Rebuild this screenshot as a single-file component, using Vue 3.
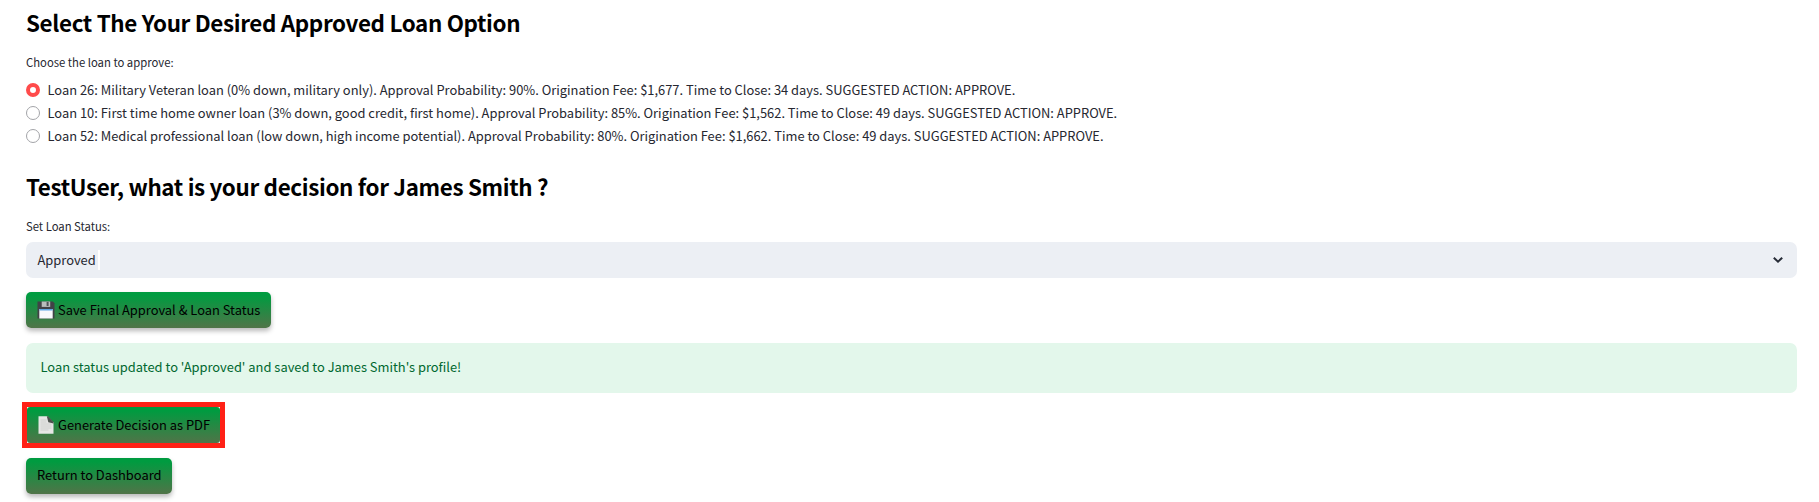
<script setup>
import { ref } from 'vue'

const loans = [
  'Loan 26: Military Veteran loan (0% down, military only). Approval Probability: 90%. Origination Fee: $1,677. Time to Close: 34 days. SUGGESTED ACTION: APPROVE.',
  'Loan 10: First time home owner loan (3% down, good credit, first home). Approval Probability: 85%. Origination Fee: $1,562. Time to Close: 49 days. SUGGESTED ACTION: APPROVE.',
  'Loan 52: Medical professional loan (low down, high income potential). Approval Probability: 80%. Origination Fee: $1,662. Time to Close: 49 days. SUGGESTED ACTION: APPROVE.',
]
const selected = ref(0)
</script>

<template>
  <main class="page">
    <h2 class="title">Select The Your Desired Approved Loan Option</h2>
    <p class="label">Choose the loan to approve:</p>
    <div class="radios">
      <div v-for="(loan, i) in loans" :key="i" class="radio" @click="selected = i">
        <span class="dot" :class="{ on: selected === i }"></span>
        <span class="text">{{ loan }}</span>
      </div>
    </div>
    <h2 class="title second">TestUser, what is your decision for James Smith ?</h2>
    <p class="label">Set Loan Status:</p>
    <div class="select">
      <span class="text">Approved</span><span class="caret"></span>
      <svg class="chevron" width="12" height="8" viewBox="0 0 12 8"><path d="M1.8 1.8 6 5.7l4.2-3.9" fill="none" stroke="#262b36" stroke-width="2" /></svg>
    </div>
    <button class="btn save">
      <svg class="icon" width="18" height="18" viewBox="0 0 18 18">
        <path d="M0.5 0.5h15.3l1.7 1.7v15.3h-17z" fill="#414247" />
        <path d="M4.7 0.5h8.5v5.4H4.7z" fill="#b9bdbd" />
        <path d="M9.6 1h2v4h-2z" fill="#505459" />
        <path d="M2.3 8h13.4v9.5H2.3z" fill="#f8f9fb" />
        <path d="M2.3 8h13.4v1.5H2.3z" fill="#5fa7e5" />
      </svg>
      <span class="text">Save Final Approval &amp; Loan Status</span>
    </button>
    <div class="alert"><span class="text">Loan status updated to 'Approved' and saved to James Smith's profile!</span></div>
    <div class="highlight">
      <button class="btn generate">
        <svg class="icon" width="18" height="18" viewBox="0 0 18 18">
          <path d="M1.5 0.3h9.2l5.8 6.2v11.2h-15z" fill="#e6e6e5" />
          <path d="M9.8 0.3h1.2l5.5 5.6v1.6l-5.2-1.2z" fill="#4c524e" />
          <path d="M3.5 4h6M3.5 6h6M3.5 8h11M3.5 10h11M3.5 12h11M3.5 14h8" stroke="#c9cac9" stroke-width="0.8" />
        </svg>
        <span class="text">Generate Decision as PDF</span>
      </button>
    </div>
    <button class="btn return"><span class="text">Return to Dashboard</span></button>
  </main>
</template>

<style>
body {
  margin: 0;
  background: #fff;
}
</style>

<style scoped>
.page {
  box-sizing: border-box;
  height: 502px;
  padding: 7px 22px 0 26px;
  display: flex;
  flex-direction: column;
  align-items: flex-start;
  overflow: hidden;
  font-family: "Noto Sans CJK SC", "Liberation Sans", sans-serif;
  font-size: 12.9px;
  color: #262730;
  white-space: nowrap;
}
.title {
  margin: 0;
  height: 32px;
  line-height: 30px;
  font-size: 22.4px;
  letter-spacing: -0.35px;
  font-weight: 700;
  color: #000;
}
.label {
  margin: 13px 0 0;
  height: 20px;
  line-height: 20px;
  font-size: 11.3px;
}
.radios {
  margin-top: 7px;
}
.radio {
  height: 23px;
  display: flex;
  align-items: center;
  gap: 7.5px;
}
.text {
  padding-bottom: 2px;
}
.dot {
  box-sizing: border-box;
  width: 14px;
  height: 14px;
  margin-bottom: 1px;
  border: 1px solid #a3a4a8;
  border-radius: 50%;
  background: #fff;
}
.dot.on {
  border: 4.5px solid #ff4b4b;
}
.second {
  margin-top: 23px;
}
.select {
  box-sizing: border-box;
  margin-top: 6px;
  width: 100%;
  height: 36px;
  padding: 0 13px 0 11.5px;
  display: flex;
  align-items: center;
  border-radius: 7px;
  background: #eceff4;
}
.caret {
  width: 2px;
  height: 20px;
  margin-left: 2px;
  background: #fff;
}
.chevron {
  margin-left: auto;
}
.btn {
  box-sizing: border-box;
  height: 36px;
  padding: 0 0 0 11px;
  display: flex;
  align-items: center;
  gap: 3px;
  border: 0;
  border-radius: 5px;
  background: linear-gradient(#009b40 10%, #507448 100%);
  box-shadow: 0 3px 5px rgba(0, 0, 0, 0.28);
  font: inherit;
  color: #000;
}
.icon {
  flex: none;
}
.save {
  margin-top: 14px;
  width: 245px;
}
.alert {
  box-sizing: border-box;
  margin-top: 15px;
  width: 100%;
  height: 50px;
  padding: 0 0 2px 14.5px;
  display: flex;
  align-items: center;
  border-radius: 7px;
  background: #e3f7eb;
  color: #00682f;
}
.highlight {
  box-sizing: border-box;
  width: 203px;
  height: 46px;
  margin: 9px 0 0 -4px;
  border: 5px solid #ff2116;
}
.generate {
  width: 193px;
  padding-left: 10px;
  border-radius: 3px;
  box-shadow: none;
}
.return {
  margin-top: 10px;
  padding-bottom: 2px;
  width: 146px;
}
</style>
